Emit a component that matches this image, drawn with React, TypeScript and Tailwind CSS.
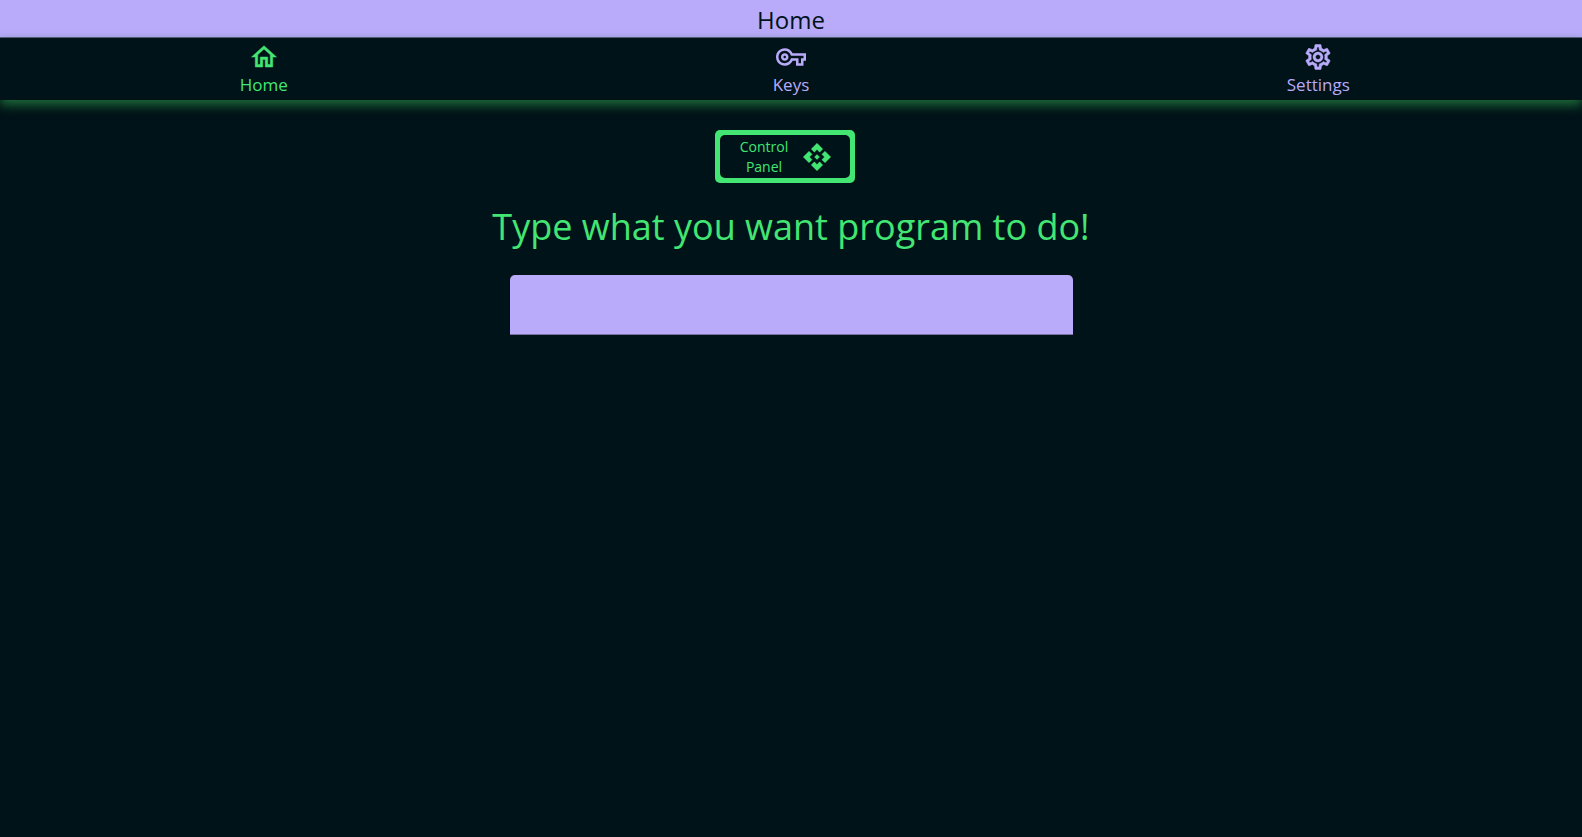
import { MdApi, MdOutlineHome, MdOutlineSettings, MdOutlineVpnKey } from "react-icons/md";

const links = [
  { label: "Home", href: "#home", Icon: MdOutlineHome, stroke: 0.4, active: true },
  { label: "Keys", href: "#keys", Icon: MdOutlineVpnKey, stroke: 0, active: false },
  { label: "Settings", href: "#settings", Icon: MdOutlineSettings, stroke: 0.4, active: false },
];

export default function App() {
  return (
    <div className="min-h-screen bg-[#001318] font-['Open_Sans',sans-serif] text-[#43e673]">
      <header className="flex h-[38px] items-center justify-center border-b border-[#5d5b85] bg-[#b9aafa]">
        <h1 className="pt-0.5 text-2xl leading-8 font-medium text-[#001318]">Home</h1>
      </header>
      <nav className="grid h-[62px] grid-cols-3 shadow-[0_5px_10px_0_#1c6b38]">
        {links.map(({ label, href, Icon, stroke, active }) => (
          <a
            key={label}
            href={href}
            aria-current={active ? "page" : undefined}
            className={`flex flex-col items-center bg-[#001318] pt-1 text-[17px] leading-[26px] ${
              active ? "text-[#43e673]" : "text-[#b9aafa]"
            }`}
          >
            <Icon
              size={30}
              strokeWidth={stroke}
              aria-hidden="true"
              className="[&_[fill=none]]:stroke-none"
            />
            {label}
          </a>
        ))}
      </nav>
      <main className="flex flex-col items-center pt-[30px]">
        <button
          type="button"
          className="mr-3 rounded-[5px] bg-[#43e673] p-[5px] text-sm leading-5"
        >
          <span className="flex h-[43px] w-[130px] items-center justify-center gap-3 rounded-[5px] bg-[#001318]">
            <span className="w-[52px]">Control Panel</span>
            <MdApi
              size={30}
              strokeWidth={0.3}
              aria-hidden="true"
              className="[&_[fill=none]]:stroke-none"
            />
          </span>
        </button>
        <label htmlFor="command" className="mt-4 text-4xl leading-[56px]">
          Type what you want program to do!
        </label>
        <input
          id="command"
          type="text"
          className="mt-5 h-[60px] w-[563px] max-w-full rounded-t-[5px] border-b border-[#78709f] bg-[#b9aafa] px-4 text-2xl text-[#001318] outline-none"
        />
      </main>
    </div>
  );
}
